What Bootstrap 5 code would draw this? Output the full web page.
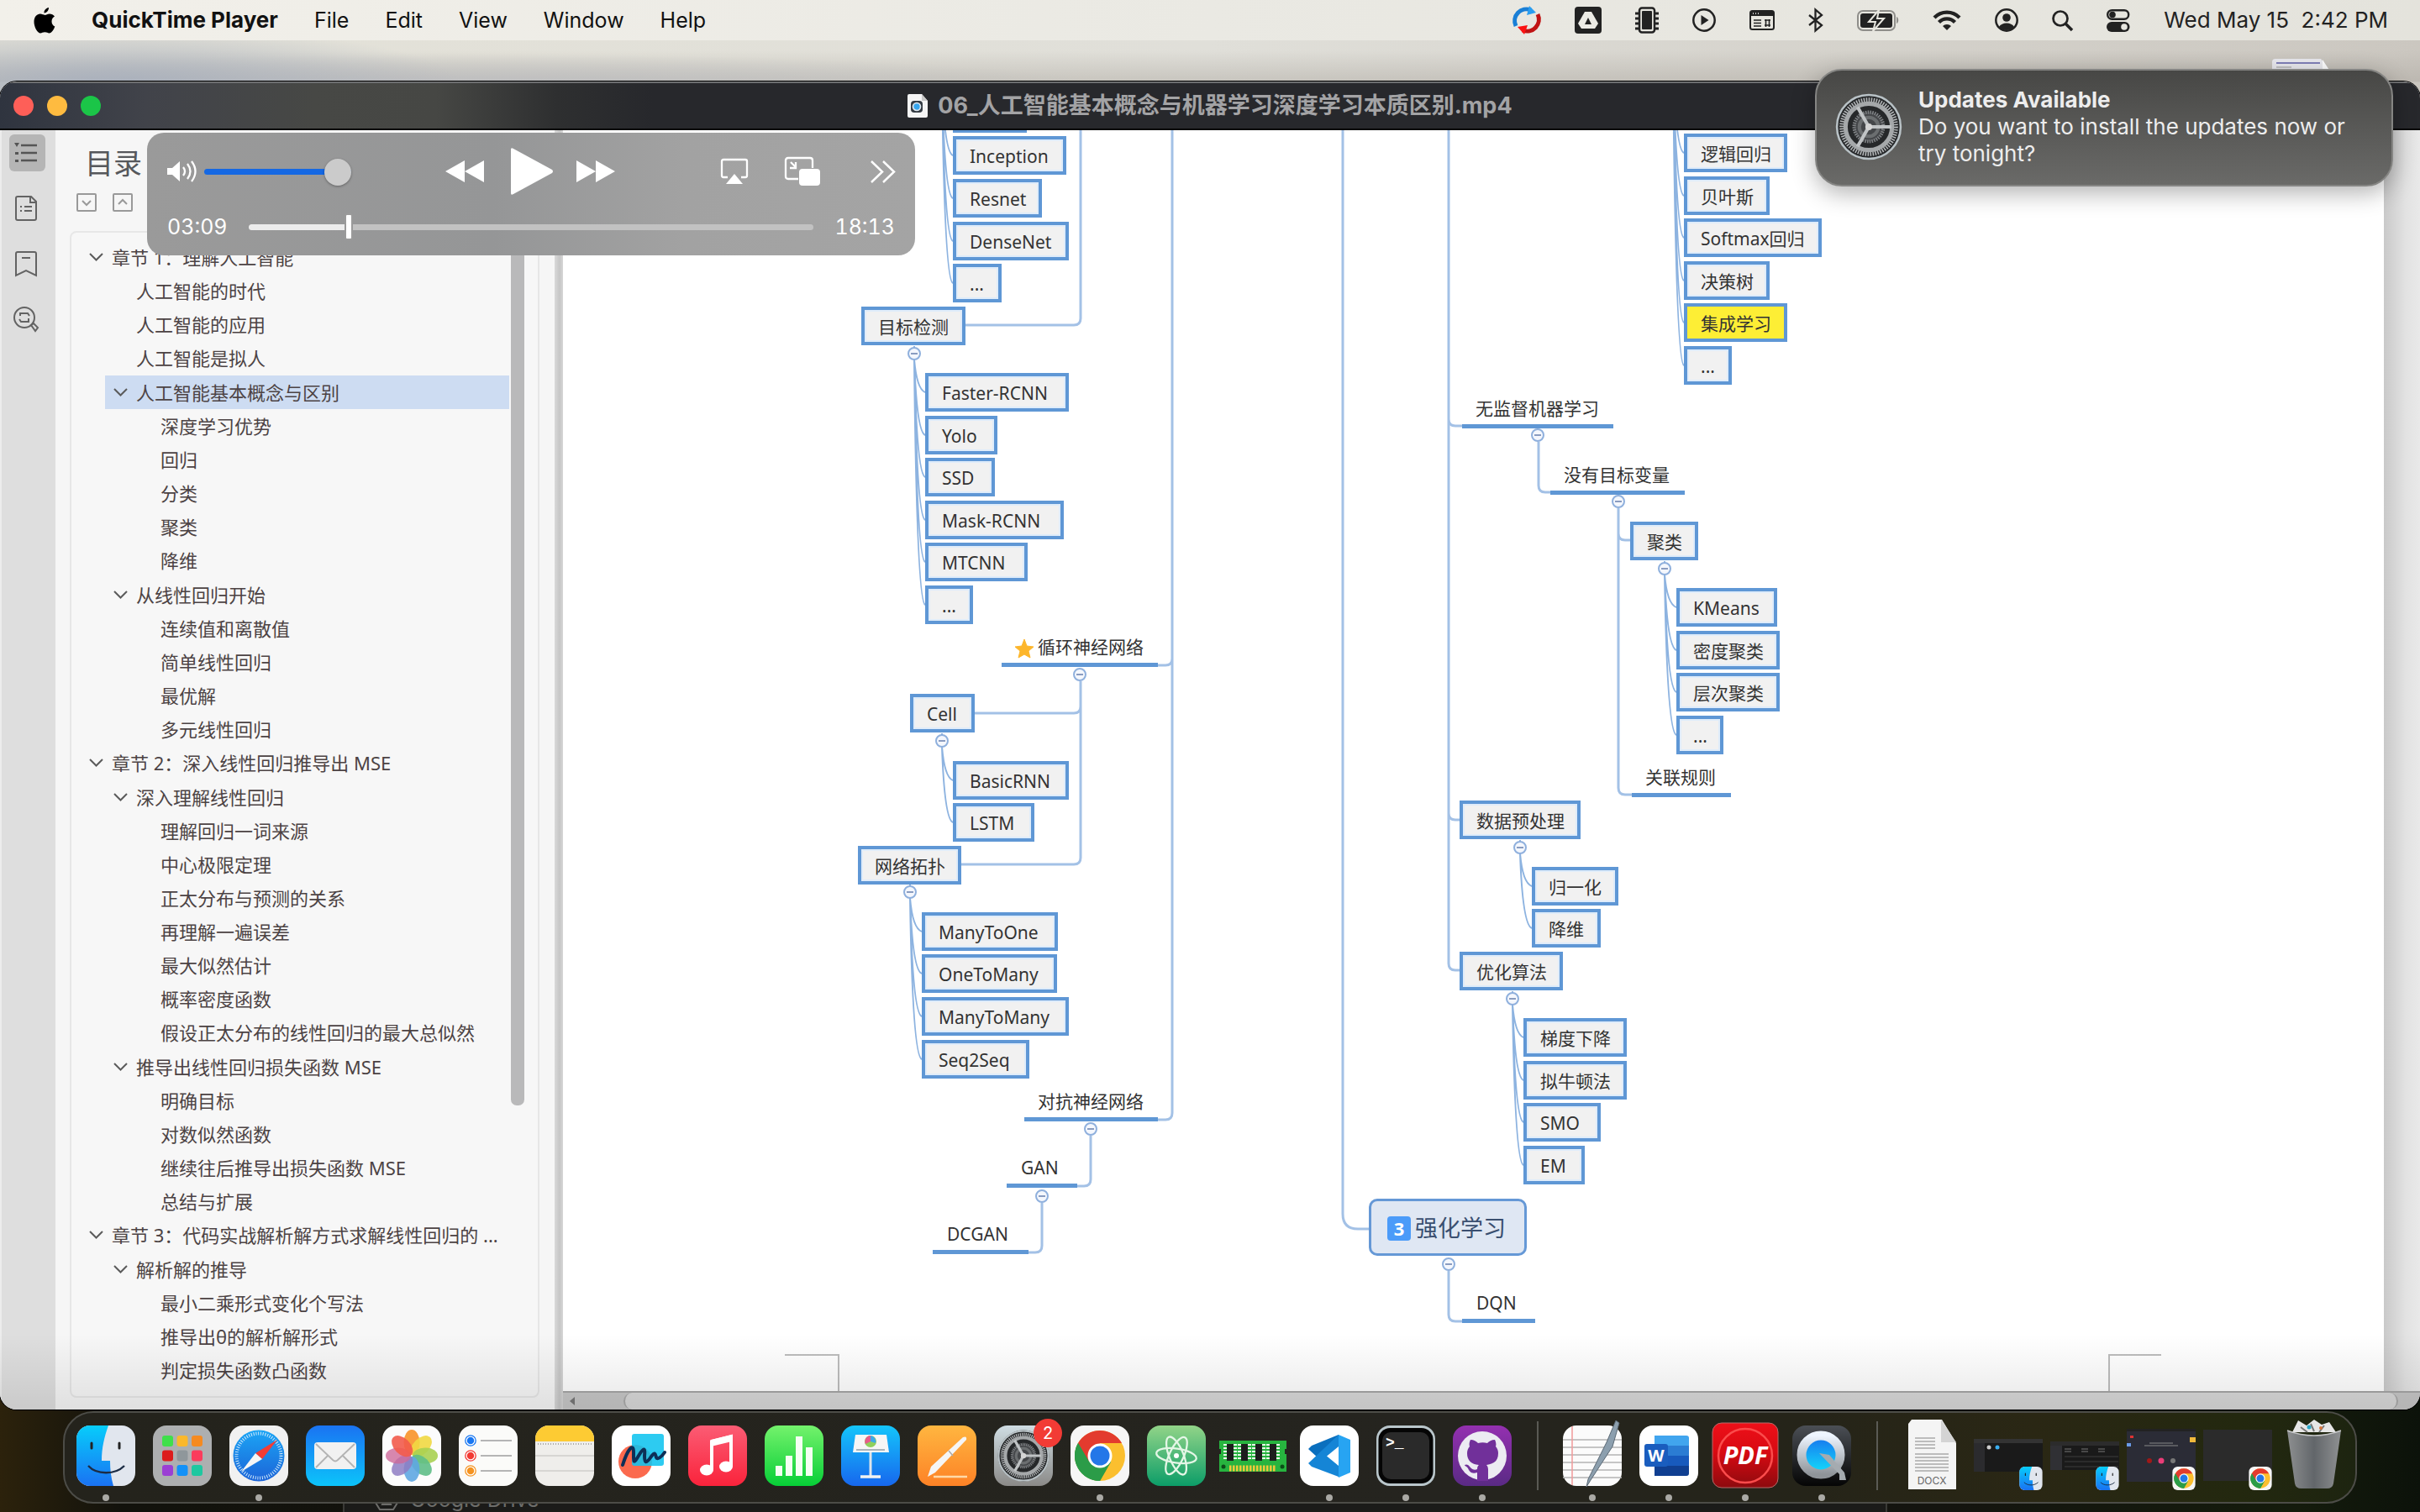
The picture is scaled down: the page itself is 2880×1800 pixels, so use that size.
<!DOCTYPE html>
<html lang="zh-CN">
<head>
<meta charset="utf-8">
<meta name="viewport" content="width=device-width, initial-scale=1">
<title>QuickTime Player</title>
<link href="https://cdn.jsdelivr.net/npm/bootstrap@5.3.0/dist/css/bootstrap.min.css" rel="stylesheet">
<style>
:root{--ui:Inter,"Noto Sans CJK SC",sans-serif;--doc:"Noto Sans","Noto Sans CJK SC",sans-serif;--line:#a3c1e6;--edge:#5f97d5}
body{height:100vh;overflow:hidden;font-family:var(--ui);font-size:26px;line-height:32px;color:#111;
 background:radial-gradient(ellipse 420px 70px at 130px 100px,#a9b0bc,transparent),radial-gradient(ellipse 760px 40px at 560px 104px,#bcbdc0,transparent),linear-gradient(180deg,transparent 60px,rgba(170,165,158,.45) 97px,transparent 98px),linear-gradient(90deg,#e4e2d8,#e0dfd9 50%,#cbc7c0) 0 0/100% 130px no-repeat,linear-gradient(90deg,#2c220c,#12120c 5%,#14140f 80%,#141b0c 95%,#0c120a)}
button,a.row-link{color:inherit;text-decoration:none}
.icon-btn{background:none;border:0;padding:0;display:flex;color:inherit}
svg{display:block;flex:none;overflow:visible}
.menubar{height:48px;background:linear-gradient(90deg,#f2f0ea,#eae9e3 50%,#e4e3dc);padding:0 38px 0 40px}
.menus{gap:43px;font-size:25px}
.app-name{font-size:26px;font-weight:700}
.status{color:#222;font-size:26px;gap:40px}
.clock{white-space:pre}
.player-window{margin-top:49px;border-radius:20px;overflow:hidden;min-height:0;background:#dedede;box-shadow:0 0 0 1px #000}
.titlebar{height:58px;background:linear-gradient(90deg,#2f343f,#41434a 6%,#474845 13%,#464744 18%,#2e2f30 23%,#27282c 27%);border-top:2px solid #6d6e70;border-bottom:2px solid #050505}
.lights{left:16px;top:0;bottom:0;gap:16px}
.light{width:24px;height:24px;border-radius:50%;border:0;padding:0}
.file-title{font-weight:700;font-size:27px;color:#a3a3a5;gap:12px;line-height:30px}
.video{min-height:0}
.rail{width:66px;background:#dedede;border-left:2px solid #ececec;padding:5px 0 0 9px;color:#636363}
.rail button{width:43px;height:44px;margin-bottom:22px;padding-right:4px;align-items:center;justify-content:center;border-radius:6px}
.rail .on{background:#b5b5b5}
.outline{width:594px;background:#f6f6f6;padding:20px 18px 14px 17px;font-family:var(--doc)}
.outline h2{font-size:34px;line-height:38px;font-weight:400;color:#56585c;margin:0 0 17px 18px}
.fold{gap:19px;margin:0 0 23px 8px;color:#9b9b9b}
.tree-box{border:2px solid #e7e7e7;border-radius:8px;min-height:0;padding:9px 16px 0 11px;background:#f7f7f7}
.tree,.tree ul{list-style:none;margin:0;padding:0;font-size:22px;color:#4c4344}
.tree ul{padding-left:29px}
.row-link{display:flex;align-items:center;gap:10px;height:40px;padding-left:10px;line-height:30px;white-space:nowrap}
.row-link.leaf{padding-left:37px}
.branch{margin-top:1px}
.chosen{background:#cddcf2}
.tree-thumb{width:16px;height:1030px;background:#b9b9ba;border-radius:0 0 7px 7px;margin-left:2px}
.divider{width:10px;background:linear-gradient(90deg,#d9d9d9,#c6c6c6 60%,#d6d6d6)}
.canvas{background:#fff;overflow:hidden;min-height:0}
.vbar{width:43px;background:linear-gradient(90deg,#c9c9c9,#e2e2e2 60%,#e9e9e9)}
.hbar{height:22px;background:#c6c6c6;border-top:2px solid #a5a5a5;padding:0 26px 0 8px;gap:58px;color:#777}
.hthumb{background:#d8d8d8;border:2px solid #a9a9a9;border-width:0 2px;border-radius:12px}
.shade{left:0;right:0;bottom:0;height:90px;background:linear-gradient(180deg,transparent,rgba(0,0,0,.09));pointer-events:none}
.node{position:absolute;font-family:var(--doc);font-size:21px;line-height:26px;color:#333;white-space:nowrap}
.boxed{height:46px;padding:7px 0 0 16px;border:4px solid var(--edge);background:#f1f1f1;box-shadow:inset 0 0 0 2px #dfecfa}
.yellow{background:#fdee35;box-shadow:none}
.lined{height:46px;border-bottom:5px solid var(--edge);padding-top:9px}
.topic{height:68px;border:3px solid #6598d6;border-radius:10px;background:#dfe7f3;font-size:27px;line-height:36px;color:#3a4f70;padding:14px 0 0 52px}
.num{left:19px;top:18px;width:28px;height:29px;border-radius:4px;background:#4b9bf9;color:#fff;font-size:22px;line-height:29px;font-weight:700}
.hud{left:175px;top:3px;width:914px;height:146px;border-radius:20px;background:linear-gradient(90deg,#9a9a9a,#959697 45%,#a2a2a2 70%,#a4a4a4);color:#fff;padding:16px 24px 0 24px}
.hud-top{height:60px}
.hud-time{font-size:25px;margin-top:20px;line-height:30px;font-variant-numeric:tabular-nums}
.transport{gap:30px;margin-left:112px}
.vol{width:175px;margin-left:8px}
.seek{width:672px}
input[type=range]{-webkit-appearance:none;appearance:none;height:32px;background:none}
input[type=range]::-webkit-slider-runnable-track{height:7px;border-radius:4px}
input[type=range]::-webkit-slider-thumb{-webkit-appearance:none}
.vol::-webkit-slider-runnable-track{background:#1568e3}
.vol::-webkit-slider-thumb{width:32px;height:32px;margin-top:-12px;border-radius:50%;background:#cbcbcb;box-shadow:0 1px 3px rgba(0,0,0,.35)}
.seek::-webkit-slider-runnable-track{background:linear-gradient(90deg,#ececec 17%,#c2c2c2 17%)}
.seek::-webkit-slider-thumb{width:10px;height:32px;margin-top:-13px;border-radius:3px;background:#fff;border:2px solid #9a9a9a}
.notice{top:82px;right:32px;width:688px;height:140px;border-radius:32px;background:linear-gradient(180deg,#474745,#6a6a68);border:2px solid #858583;box-shadow:0 8px 28px rgba(0,0,0,.3);color:#ededed;padding:0 30px 2px 21px;gap:18px;font-size:26px}
.deskfile{top:70px;right:106px}
.dock{margin-top:2px;height:110px;gap:19px;padding:0 13px 5px 13px;border:2px solid #4c4c47;border-radius:36px;background:linear-gradient(90deg,#24231c,#25241f 60%,#252419 76%,#2a2714 86%,#23280f 95%,#1d2410)}
.app{position:relative;width:72px;height:72px}
.app.run::after{content:"";position:absolute;left:32px;top:82px;width:8px;height:8px;border-radius:50%;background:#aaa9a5}
.app svg{width:72px;height:72px}
.sep{width:21px;height:82px;background:linear-gradient(#5a5a54,#5a5a54) center/2px 100% no-repeat}
.count{right:-10px;top:-8px;width:34px;height:34px;border-radius:50%;background:#f23b35;color:#fff;font-size:20px;line-height:34px}
.under{height:10px}
.drive-panel{left:408px;right:634px;bottom:0;height:30px;background:#1b1b19;color:#6d6d6a;padding:0 0 0 36px;gap:14px;font-size:25px;line-height:30px;border-left:2px solid #3a3a36;border-right:2px solid #3a3a36}
.dock,.notice{z-index:2}
</style>
<script src="https://cdn.jsdelivr.net/npm/bootstrap@5.3.0/dist/js/bootstrap.bundle.min.js"></script>
</head>
<body class="d-flex flex-column position-relative">
<svg width="0" height="0" class="position-absolute" aria-hidden="true"><defs>
<linearGradient id="gFind" x2="0" y2="1"><stop stop-color="#07cdfb"/><stop offset="1" stop-color="#1a72f3"/></linearGradient>
<linearGradient id="gBlue" x2="0" y2="1"><stop stop-color="#1a73f2"/><stop offset="1" stop-color="#0cc4fa"/></linearGradient>
<linearGradient id="gKey" x2="0" y2="1"><stop stop-color="#14c5fb"/><stop offset="1" stop-color="#1767ee"/></linearGradient>
<linearGradient id="gSaf" x2="0" y2="1"><stop stop-color="#1ba5f5"/><stop offset="1" stop-color="#1c64d8"/></linearGradient>
<linearGradient id="gRed" x2="0" y2="1"><stop stop-color="#fb5c74"/><stop offset="1" stop-color="#fa233b"/></linearGradient>
<linearGradient id="gGreen" x2="0" y2="1"><stop stop-color="#74f26c"/><stop offset="1" stop-color="#07cf37"/></linearGradient>
<linearGradient id="gOr" x2="0" y2="1"><stop stop-color="#ffb640"/><stop offset="1" stop-color="#fd8226"/></linearGradient>
<linearGradient id="gGrey" x2="0" y2="1"><stop stop-color="#cfdde3"/><stop offset="1" stop-color="#8b8a88"/></linearGradient>
<linearGradient id="gAtom" x2="0" y2="1"><stop stop-color="#92d488"/><stop offset="1" stop-color="#0c9d68"/></linearGradient>
<linearGradient id="gGit" x2="0" y2="1"><stop stop-color="#9430b0"/><stop offset="1" stop-color="#5a2a85"/></linearGradient>
<linearGradient id="gPdf" x2="0" y2="1"><stop stop-color="#ee1019"/><stop offset=".45" stop-color="#d80a12"/><stop offset="1" stop-color="#8d0a0e"/></linearGradient>
<linearGradient id="gQt" x2="0" y2="1"><stop stop-color="#4b4f55"/><stop offset="1" stop-color="#050505"/></linearGradient>
<linearGradient id="gSil" x2="0" y2="1"><stop stop-color="#eef5ff"/><stop offset="1" stop-color="#8f9499"/></linearGradient>
<linearGradient id="gCy" x2="0" y2="1"><stop stop-color="#1872ee"/><stop offset="1" stop-color="#12e0fb"/></linearGradient>
<linearGradient id="gBin" x2="1" y2="0"><stop stop-color="#8d8f90"/><stop offset=".5" stop-color="#62666a"/><stop offset="1" stop-color="#8f9192"/></linearGradient>
<symbol id="finder" viewBox="0 0 72 72"><rect x="1" width="70" height="72" rx="16" fill="#e1e6ee"/><path d="M17 0h22c-5 14-8 27-8 42h10c0 10 1 20 4 30H17A16 16 0 0 1 1 56V16A16 16 0 0 1 17 0z" fill="url(#gFind)"/><path d="M19 21v6M52 21v6" stroke="#222" stroke-width="3" stroke-linecap="round"/><path d="M15 48c10 11 32 11 43 0" fill="none" stroke="#1c2c44" stroke-width="2.400"/></symbol>
<symbol id="chrome" viewBox="0 0 72 72"><rect x="1" width="70" height="72" rx="16" fill="#f6f6f6"/><circle cx="36" cy="36" r="30" fill="#fbbf2f"/><path d="M36 36 10 21A30 30 0 0 0 36 66L49 43.500z" fill="#2b9c48"/><path d="M36 21h26L49 43z" fill="#fbbf2f"/><path d="M10 21A30 30 0 0 1 62 21H36L23 43z" fill="#e33b2e"/><path d="M10 21A30 30 0 0 0 36 66L49 43 36 50 23 43z" fill="#2b9c48"/><circle cx="36" cy="36" r="14.500" fill="#fff"/><circle cx="36" cy="36" r="11.500" fill="#2477e8"/></symbol>
<symbol id="gear" viewBox="0 0 80 80"><circle cx="40" cy="40" r="38" fill="#26282a"/><circle cx="40" cy="40" r="37" fill="none" stroke="#b9c2c6" stroke-width="2.500"/><circle cx="40" cy="40" r="31.500" fill="none" stroke="#b4b7b9" stroke-width="5" stroke-dasharray="1.500 1.400"/><circle cx="40" cy="40" r="27" fill="none" stroke="#a5a8aa" stroke-width="5"/><circle cx="40" cy="40" r="17" fill="#45474a" stroke="#808386" stroke-width="4" stroke-dasharray="1.500 1.200"/><circle cx="40" cy="40" r="11" fill="none" stroke="#6b6e70" stroke-width="4"/><path d="M40 40h26M40 40 27 17M40 40 27 63" stroke="#c0c3c5" stroke-width="4"/><circle cx="40" cy="40" r="4" fill="#d5d5d5"/></symbol>
<symbol id="chev" viewBox="0 0 17 10"><path d="M1 1l7.500 7.500L16 1" fill="none" stroke="#5b5b5b" stroke-width="2"/></symbol>
</defs></svg>

<header class="menubar d-flex align-items-center justify-content-between">
 <nav class="d-flex align-items-center menus">
  <button class="icon-btn" aria-label="Apple"><svg width="26" height="31" viewBox="0 0 26 31"><path d="M18 0c.2 3-2.500 6.500-5.500 6.500C12 3.500 15 .5 18 0zM21.500 16.500c0-3 1.600-4.800 3.500-6-1.500-2-3.600-3-6-3-2.500 0-4 1.400-5.500 1.400S10 7.600 7.800 7.600C4 7.600.5 11 .5 17c0 6.500 4.300 13.500 7.600 13.500 1.800 0 2.800-1.200 5.300-1.200s3.300 1.200 5.200 1.200c2.900 0 5.600-4.600 6.700-7.900-2-.9-3.800-3-3.800-6.100z"/></svg></button>
  <button class="icon-btn app-name">QuickTime Player</button>
  <button class="icon-btn">File</button><button class="icon-btn">Edit</button><button class="icon-btn">View</button><button class="icon-btn">Window</button><button class="icon-btn">Help</button>
 </nav>
 <div class="d-flex align-items-center status">
  <button class="icon-btn" aria-label="Sync"><svg width="34" height="34" viewBox="0 0 34 34" fill="none" stroke-width="5"><path d="M4 24A14 14 0 0 1 22 5" stroke="#1a7fd6"/><path d="M20 0l8 8-11 3z" fill="#2a9df0"/><path d="M30 10A14 14 0 0 1 12 29" stroke="#c01414"/><path d="M14 34l-8-9 12-2z" fill="#fb1212"/></svg></button>
  <button class="icon-btn" aria-label="Drive"><svg width="32" height="32" viewBox="0 0 32 32"><rect width="32" height="32" rx="4" fill="#222"/><path d="M12 6h8l8 14-4 6H8l-4-6z" fill="#ecebe5"/><path d="M16 13l4 8h-8z" fill="#222"/></svg></button>
  <button class="icon-btn" aria-label="Memory"><svg width="28" height="32" viewBox="0 0 28 32"><rect x="5" y="1.500" width="18" height="29" rx="3" fill="none" stroke="#222" stroke-width="2.500"/><rect x="8" y="5" width="12" height="22" rx="1" fill="#222"/><path d="M0 8h5M0 14h5M0 20h5M0 26h5M23 8h5M23 14h5M23 20h5M23 26h5" stroke="#222" stroke-width="3"/></svg></button>
  <button class="icon-btn" aria-label="Now playing"><svg width="28" height="28" viewBox="0 0 28 28"><circle cx="14" cy="14" r="12.700" fill="none" stroke="#222" stroke-width="2.500"/><path d="M10.500 8v12l9-6z" fill="#222"/></svg></button>
  <button class="icon-btn" aria-label="Shortcuts"><svg width="30" height="24" viewBox="0 0 30 24"><rect x="1" y="1" width="28" height="22" rx="2.500" fill="none" stroke="#222" stroke-width="2"/><path d="M1 1h28v6H1z" fill="#222"/><path d="M4 4h1M7 4h1M10 4h1" stroke="#fff" stroke-width="1.500"/><path d="M5 12h9M5 15.500h9M5 19h9M18 12h7M18 18h7M19.500 11v9M23.500 11v9" stroke="#222" stroke-width="1.600"/></svg></button>
  <button class="icon-btn" aria-label="Bluetooth"><svg width="18" height="28" viewBox="0 0 18 28"><path d="M1 8l15 12-7.500 6.500v-25L16 8 1 20" fill="none" stroke="#222" stroke-width="2.300"/></svg></button>
  <button class="icon-btn" aria-label="Battery"><svg width="50" height="25" viewBox="0 0 50 25"><rect x="1" y="1" width="44" height="23" rx="6" fill="none" stroke="#8f8e8a" stroke-width="2"/><rect x="4" y="4" width="38" height="17" rx="3" fill="#222"/><path d="M47 8c3 1 3 7 0 8z" fill="#8f8e8a"/><path d="M26 0 14 14h8l-3 11 13-15h-8z" fill="#222" stroke="#e7e6df" stroke-width="2"/></svg></button>
  <button class="icon-btn" aria-label="Wi-Fi"><svg width="34" height="24" viewBox="0 0 34 24" fill="none" stroke="#222" stroke-width="4.300"><path d="M2 9a21 21 0 0 1 30 0M7.500 14.500a13 13 0 0 1 19 0"/><path d="M17 24l-5-5a7 7 0 0 1 10 0z" fill="#222" stroke="none"/></svg></button>
  <button class="icon-btn" aria-label="User"><svg width="28" height="28" viewBox="0 0 28 28"><circle cx="14" cy="14" r="12.700" fill="none" stroke="#222" stroke-width="2.500"/><circle cx="14" cy="11" r="4.800" fill="#222"/><path d="M5 22c3-6 15-6 18 0a12 12 0 0 1-18 0z" fill="#222"/></svg></button>
  <button class="icon-btn" aria-label="Search"><svg width="25" height="25" viewBox="0 0 25 25" fill="none" stroke="#222" stroke-width="2.700"><circle cx="10" cy="10" r="8.500"/><path d="M16 16l8 8" stroke-width="3.500"/></svg></button>
  <button class="icon-btn" aria-label="Control Centre"><svg width="28" height="27" viewBox="0 0 28 27"><rect x="1.200" y="1.200" width="25" height="10.500" rx="5.200" fill="none" stroke="#222" stroke-width="2.400"/><circle cx="7" cy="6.500" r="3.800" fill="#222"/><rect y="15" width="27.500" height="12" rx="6" fill="#222"/><circle cx="21" cy="21" r="3.800" fill="#e7e6df"/></svg></button>
  <span class="clock">Wed May 15  2:42 PM</span>
 </div>
</header>

<svg class="deskfile position-absolute" width="70" height="28" viewBox="0 0 70 28"><path d="M0 4q0-4 4-4h54l12 16v12H0z" fill="#e9e9ee"/><path d="M5 5h52" stroke="#8080b8" stroke-width="2"/><path d="M5 10h18M5 13h30" stroke="#999" stroke-width="1"/><path d="M60 1v14h9z" fill="#fff"/></svg>

<main class="player-window flex-fill d-flex flex-column position-relative">
 <div class="titlebar position-relative d-flex align-items-center justify-content-center">
  <div class="lights position-absolute d-flex align-items-center"><button class="light" style="background:#fe5f58" aria-label="Close"></button><button class="light" style="background:#febb40" aria-label="Minimise"></button><button class="light" style="background:#1bc548" aria-label="Zoom"></button></div>
  <div class="file-title d-flex align-items-center"><svg width="24" height="28" viewBox="0 0 24 28"><path d="M2 0h15l7 8v18q0 2-2 2H2q-2 0-2-2V2q0-2 2-2z" fill="#f5f5f5"/><path d="M17 0v8h7z" fill="#c8c8c8"/><rect x="4" y="8" width="14" height="14" rx="4" fill="#333a42"/><circle cx="11" cy="15" r="4.500" fill="#35a5ee" stroke="#dde6ee" stroke-width="1.700"/></svg><span>06_人工智能基本概念与机器学习深度学习本质区别.mp4</span></div>
 </div>
 <div class="video d-flex flex-fill position-relative">
  <nav class="rail">
   <button class="icon-btn on" aria-label="Outline"><svg width="28" height="24" viewBox="0 0 28 24"><path d="M8 3h19M8 12h19M8 21h19" stroke="#555" stroke-width="2.400"/><path d="M0 0h6L3 5zM1 11h4v3H1zM1 20h4v3H1z" fill="#555"/></svg></button>
   <button class="icon-btn" aria-label="Pages"><svg width="26" height="30" viewBox="0 0 26 30" fill="none" stroke="#636363" stroke-width="2"><path d="M3 1h16l6 6v20q0 2-2 2H3q-2 0-2-2V3q0-2 2-2z"/><path d="M18 1v7h7M6 13h2M11 13h9M6 18h2M11 18h9"/></svg></button>
   <button class="icon-btn" aria-label="Bookmarks"><svg width="26" height="30" viewBox="0 0 26 30" fill="none" stroke="#636363" stroke-width="2"><path d="M3 1h20q2 0 2 2v26l-12-6-12 6V3q0-2 2-2zM8 8h10"/></svg></button>
   <button class="icon-btn" aria-label="Search"><svg width="30" height="30" viewBox="0 0 30 30" fill="none" stroke="#636363" stroke-width="2"><circle cx="13" cy="13" r="12"/><path d="M8 11V8h9l2 3M18 14v4H9l-2-3M21 22l3-2 5 5-3 4z"/></svg></button>
  </nav>
  <aside class="outline d-flex flex-column">
   <h2>目录</h2>
   <div class="d-flex fold">
    <button class="icon-btn" aria-label="Expand all"><svg width="24" height="22" viewBox="0 0 24 22" fill="none" stroke="#999" stroke-width="2"><rect x="1" y="1" width="22" height="20" rx="1"/><path d="M7 9l5 5 5-5"/></svg></button>
    <button class="icon-btn" aria-label="Collapse all"><svg width="24" height="22" viewBox="0 0 24 22" fill="none" stroke="#999" stroke-width="2"><rect x="1" y="1" width="22" height="20" rx="1"/><path d="M7 13l5-5 5 5"/></svg></button>
   </div>
   <div class="tree-box flex-fill d-flex">
    <ul class="tree flex-fill" id="tree"></ul>
    <div class="tree-thumb"></div>
   </div>
  </aside>
  <div class="divider"></div>
  <div class="flex-fill d-flex flex-column" style="min-width:0">
   <div class="d-flex flex-fill" style="min-height:0">
    <section class="canvas flex-fill position-relative" id="canvas">
     <svg width="2167" height="1501" viewBox="670 155 2167 1501" fill="none" stroke="#a3c1e6" stroke-width="3" id="links">
      <path d="M1286 155v224q0 8-8 8H1149M1395 155v629q0 8-8 8h-9M1395 780v545q0 8-8 8h-9M1286 811v30q0 8-8 8H1160M1286 840v181q0 8-8 8H1144M1298 1352v52q0 8-8 8h-8M1240 1432v51q0 8-8 8h-8"/>
      <path d="M1598 155v1290q0 18 18 18h13M1724 155v344q0 8 8 8h8M1724 490v478q0 8 8 8h5M1724 960v187q0 8 8 8h5M1831 526v52q0 8 8 8h6M1926 605v30q0 8 8 8h6M1926 630v308q0 8 8 8h8M1724 1513v52q0 8 8 8h8"/>
      <path d="M934 1613h64v43M2572 1613h-62v43" stroke="#bdbdbd" stroke-width="2"/>
      <path d="M1219 761l3 8 8 1-6 5 2 8-7-4-7 4 2-8-6-5 8-1z" fill="#fdb62b" stroke="#fdb62b" stroke-width="1"/>
     </svg>
    </section>
    <div class="vbar"></div>
   </div>
   <div class="hbar d-flex"><svg width="6" height="20" viewBox="0 0 6 20"><path d="M6 5v10L0 10z" fill="#777"/></svg><div class="hthumb flex-fill"></div></div>
  </div>
  <div class="shade position-absolute"></div>
  <div class="hud position-absolute">
   <div class="hud-top d-flex align-items-center">
    <svg width="36" height="26" viewBox="0 0 36 26"><path d="M0 9h6l9-8v24l-9-8H0z" fill="#fff"/><path d="M19 8q4 5 0 10M24 4q7 9 0 18M29 1q9 12 0 24" fill="none" stroke="#fff" stroke-width="2.300"/></svg>
    <input class="vol" type="range" value="100" aria-label="Volume">
    <div class="d-flex align-items-center transport">
     <button class="icon-btn" aria-label="Rewind"><svg width="46" height="26" viewBox="0 0 46 26"><path d="M23 0v26L0 13zM46 0v26L23 13z" fill="#fff"/></svg></button>
     <button class="icon-btn" aria-label="Play"><svg width="50" height="56" viewBox="-2 0 50 56"><path d="M0 2q0-3 3-1l46 25q2 2 0 4L3 55q-3 2-3-1z" fill="#fff"/></svg></button>
     <button class="icon-btn" aria-label="Forward"><svg width="46" height="26" viewBox="0 0 46 26"><path d="M0 0v26l23-13zM23 0v26l23-13z" fill="#fff"/></svg></button>
    </div>
    <div class="d-flex align-items-center ms-auto" style="gap:44px">
     <button class="icon-btn" aria-label="AirPlay"><svg width="32" height="30" viewBox="0 0 32 30"><path d="M8 22H3q-2 0-2-2V3q0-2 2-2h26q2 0 2 2v17q0 2-2 2h-5" fill="none" stroke="#fff" stroke-width="2.300"/><path d="M16 18l10 12H6z" fill="#fff"/></svg></button>
     <button class="icon-btn" aria-label="Picture in picture"><svg width="42" height="34" viewBox="0 0 42 34"><path d="M16 26H4q-3 0-3-3V4q0-3 3-3h26q3 0 3 3v9M7 6l6 6M13 6v7H6" fill="none" stroke="#fff" stroke-width="2.300"/><rect x="17" y="14" width="25" height="20" rx="4" fill="#fff"/></svg></button>
     <button class="icon-btn ms-3" aria-label="More"><svg width="29" height="27" viewBox="0 0 29 27"><path d="M1 1l13 12.500L1 26M15 1l13 12.500L15 26" fill="none" stroke="#fff" stroke-width="2.500"/></svg></button>
    </div>
   </div>
   <div class="hud-time d-flex align-items-center justify-content-between"><span>03:09</span><input class="seek" type="range" max="1093" value="189" aria-label="Position"><span>18:13</span></div>
  </div>
 </div>
</main>

<div class="drive-panel position-absolute d-flex align-items-center"><svg width="28" height="25" viewBox="0 0 28 25"><path d="M9 1h10l8 15-5 8H6l-5-8zM14 9l5 9H9z" fill="none" stroke="#6d6d6a" stroke-width="2"/></svg><span>Google Drive</span></div>
<aside class="notice position-absolute d-flex align-items-center" role="alert">
 <svg width="82" height="82"><use href="#gear"/></svg>
 <div><div class="fw-bold">Updates Available</div><div>Do you want to install the updates now or try tonight?</div></div>
</aside>

<footer class="dock d-flex align-items-center align-self-center">
 <div class="app run"><svg><use href="#finder"/></svg></div>
 <div class="app"><svg viewBox="0 0 72 72"><rect x="1" width="70" height="72" rx="16" fill="#adafb0"/><g><rect x="12" y="12" width="13" height="13" rx="3" fill="#3fe04a"/><rect x="29.500" y="12" width="13" height="13" rx="3" fill="#fbb82c"/><rect x="47" y="12" width="13" height="13" rx="3" fill="#f58a20"/><rect x="12" y="29.500" width="13" height="13" rx="3" fill="#dd1c1c"/><rect x="29.500" y="29.500" width="13" height="13" rx="3" fill="#8f979b"/><rect x="47" y="29.500" width="13" height="13" rx="3" fill="#fb3c5c"/><rect x="12" y="47" width="13" height="13" rx="3" fill="#9b3fd4"/><rect x="29.500" y="47" width="13" height="13" rx="3" fill="#1391f7"/><rect x="47" y="47" width="13" height="13" rx="3" fill="#1ec8a0"/></g></svg></div>
 <div class="app run"><svg viewBox="0 0 72 72"><rect x="1" width="70" height="72" rx="16" fill="#f1f1f1"/><circle cx="36" cy="36" r="30.500" fill="url(#gSaf)"/><circle cx="36" cy="36" r="26.500" fill="none" stroke="#cfe9fb" stroke-width="4" stroke-dasharray="1 1.800"/><path d="M58 17 40 40l-8-7z" fill="#f33c35"/><path d="M15 55 32 33l8 7z" fill="#f6f6f6"/></svg></div>
 <div class="app"><svg viewBox="0 0 72 72"><rect x="1" width="70" height="72" rx="16" fill="url(#gBlue)"/><rect x="11" y="20" width="50" height="32" rx="4" fill="#f1f1f1"/><path d="M13 22l20 19q3 3 6 0l20-19M13 50l15-15M59 50 44 35" fill="none" stroke="#b3b3b3" stroke-width="1.800"/></svg></div>
 <div class="app"><svg viewBox="0 0 72 72"><rect x="1" width="70" height="72" rx="16" fill="#fcfcfc"/><g opacity=".9"><ellipse cx="36" cy="20" rx="9.500" ry="15" fill="#f9942a"/><ellipse cx="36" cy="20" rx="9.500" ry="15" fill="#f0d52f" transform="rotate(45 36 36)" opacity=".9"/><ellipse cx="36" cy="20" rx="9.500" ry="15" fill="#a0cc3f" transform="rotate(90 36 36)" opacity=".9"/><ellipse cx="36" cy="20" rx="9.500" ry="15" fill="#4fb87b" transform="rotate(135 36 36)" opacity=".9"/><ellipse cx="36" cy="20" rx="9.500" ry="15" fill="#4f9fe0" transform="rotate(180 36 36)" opacity=".9"/><ellipse cx="36" cy="20" rx="9.500" ry="15" fill="#8370bd" transform="rotate(225 36 36)" opacity=".85"/><ellipse cx="36" cy="20" rx="9.500" ry="15" fill="#c95a90" transform="rotate(270 36 36)" opacity=".8"/><ellipse cx="36" cy="20" rx="9.500" ry="15" fill="#f24a38" transform="rotate(315 36 36)" opacity=".9"/></g></svg></div>
 <div class="app"><svg viewBox="0 0 72 72"><rect x="1" width="70" height="72" rx="16" fill="#fbfbf9"/><path d="M27 18h37M27 36h37M27 54h37" stroke="#b5b5b5" stroke-width="1.800"/><g stroke="#fff" stroke-width="1.500"><circle cx="15" cy="18" r="5" fill="#1877f2"/><circle cx="15" cy="36" r="5" fill="#f33a33"/><circle cx="15" cy="54" r="5" fill="#f59320"/></g><g fill="none" stroke-width="1.300"><circle cx="15" cy="18" r="6.200" stroke="#1877f2"/><circle cx="15" cy="36" r="6.200" stroke="#f33a33"/><circle cx="15" cy="54" r="6.200" stroke="#f59320"/></g></svg></div>
 <div class="app"><svg viewBox="0 0 72 72"><rect x="1" width="70" height="72" rx="16" fill="#efeeeb"/><path d="M1 19v-3A16 16 0 0 1 17 0h38a16 16 0 0 1 16 16v3z" fill="#fdcb33"/><path d="M1 36h70M1 54h70" stroke="#cfcecb" stroke-width="1.500"/><path d="M4 22h66" stroke="#aaa" stroke-width="2" stroke-dasharray="1 2"/></svg></div>
 <div class="app"><svg viewBox="0 0 72 72"><rect x="1" width="70" height="72" rx="16" fill="#fff"/><circle cx="29" cy="43" r="20" fill="#fb6a4e"/><rect x="25" y="10" width="38" height="38" rx="3" fill="#10c4ef" opacity=".88"/><path d="M14 47C20 28 27 20 27 32c0 10-1 16 6 4 6-10 8-10 7 0 0 9 2 10 8 1 5-7 5-2 6 1s6 0 10-6" fill="none" stroke="#0d2f57" stroke-width="4" stroke-linecap="round"/></svg></div>
 <div class="app"><svg viewBox="0 0 72 72"><rect x="1" width="70" height="72" rx="16" fill="url(#gRed)"/><path d="M29 52V19l23-6v36" fill="none" stroke="#fff" stroke-width="4"/><path d="M28 17l25-6v8l-25 6z" fill="#fff"/><ellipse cx="23" cy="53" rx="8" ry="6.500" fill="#fff"/><ellipse cx="46" cy="49" rx="8" ry="6.500" fill="#fff"/></svg></div>
 <div class="app"><svg viewBox="0 0 72 72"><rect x="1" width="70" height="72" rx="16" fill="url(#gGreen)"/><path d="M18 48v12M30 36v24M42 13v47M54 26v34" stroke="#f5fff3" stroke-width="8"/></svg></div>
 <div class="app"><svg viewBox="0 0 72 72"><rect x="1" width="70" height="72" rx="16" fill="url(#gKey)"/><path d="M18 11h37l3 21H15z" fill="#f6f6f6"/><path d="M19 29h34" stroke="#a9b4bb" stroke-width="2"/><circle cx="36" cy="19" r="7" fill="#8fd05c"/><path d="M36 19v-7a7 7 0 0 0-6 10z" fill="#e85a8a"/><path d="M36 19v-7a7 7 0 0 1 6 9z" fill="#3da9e8"/><path d="M36 32v28" stroke="#dfe5ea" stroke-width="3"/><path d="M24 61h24" stroke="#f2f2f2" stroke-width="3.500"/></svg></div>
 <div class="app"><svg viewBox="0 0 72 72"><rect x="1" width="70" height="72" rx="16" fill="url(#gOr)"/><path d="M13 61l4-12L55 14q5-2 4 3L22 56z" fill="#f5f5f5"/><path d="M38 30l5 6" stroke="#aaa" stroke-width="1.500"/><path d="M20 61h40" stroke="#ffd9a8" stroke-width="2.500"/></svg></div>
 <div class="app"><svg viewBox="0 0 72 72"><rect x="1" width="70" height="72" rx="16" fill="url(#gGrey)"/><use href="#gear" x="4" y="4" width="64" height="64"/></svg><span class="count position-absolute text-center">2</span></div>
 <div class="app run"><svg><use href="#chrome"/></svg></div>
 <div class="app"><svg viewBox="0 0 72 72"><rect x="1" width="70" height="72" rx="16" fill="url(#gAtom)"/><g fill="none" stroke="#e4f6e6" stroke-width="2.300"><ellipse cx="36" cy="36" rx="24" ry="8.500" transform="rotate(8 36 36)"/><ellipse cx="36" cy="36" rx="24" ry="8.500" transform="rotate(68 36 36)"/><ellipse cx="36" cy="36" rx="24" ry="8.500" transform="rotate(115 36 36)"/></g><circle cx="36" cy="36" r="3" fill="#fff"/></svg></div>
 <div class="app"><svg viewBox="0 0 72 72"><path d="M-4 18h80v10h-2v6h2v21H-4V34h2v-6h-2z" fill="#27b43f"/><path d="M8 48h56" stroke="#f2c83a" stroke-width="7" stroke-dasharray="2.500 1.500" transform="translate(0 3)"/><g stroke="#e9f5e9" stroke-width="16" stroke-dasharray="2 2"><path d="M9 22v20M26 22v20M43 22v20M60 22v20"/></g><path d="M5 22h8v20H5zM22 22h8v20h-8zM39 22h8v20h-8zM56 22h8v20h-8z" fill="#1d1d1d"/><circle cx="1" cy="49" r="2.500" fill="#0c4d18"/><circle cx="71" cy="49" r="2.500" fill="#0c4d18"/></svg></div>
 <div class="app run"><svg viewBox="0 0 72 72"><rect x="1" width="70" height="72" rx="16" fill="#fff"/><path d="M47 11v50L11 28l4-4z" fill="#0a6fbe"/><path d="M47 61V11L11 45l4 4z" fill="#1585d6"/><path d="M47 11l14 6v39l-14 6z" fill="#27a4f2"/><path d="M47 25v23L33 36.500z" fill="#fff"/></svg></div>
 <div class="app run"><svg viewBox="0 0 72 72"><rect x="1" width="70" height="72" rx="16" fill="#b9c6cb"/><rect x="3.500" y="3" width="65" height="66" rx="14" fill="#050505"/><rect x="8" y="8" width="56" height="56" rx="10" fill="#2a2a2a"/><text x="12" y="26" font-family="Liberation Mono" font-size="18" font-weight="700" fill="#fff">&gt;_</text></svg></div>
 <div class="app run"><svg viewBox="0 0 72 72"><rect x="1" width="70" height="72" rx="16" fill="url(#gGit)"/><circle cx="36" cy="36" r="29" fill="#ecebf2"/><path d="M30 66V56c-7 2-9-1-11-5-1-2-4-3-4-4 4-2 6 2 8 4 2 2 5 2 7 1 0-3 1-4 2-5-9-1-14-5-14-14 0-3 1-6 3-8-1-3 0-6 1-8 4 0 7 2 9 4 4-1 7-1 11 0 2-2 5-4 9-4 1 2 2 5 1 8 2 2 3 5 3 8 0 9-5 13-14 14 2 2 2 4 2 7v12z" fill="#71309a"/></svg></div>
 <div class="sep"></div>
 <div class="app run"><svg viewBox="0 0 72 72"><rect x="1" width="70" height="72" rx="16" fill="#fbfbfb"/><path d="M1 17h70M1 26h70M1 35h70M1 44h70M1 53h70M1 62h70" stroke="#b4b4b4" stroke-width="1.500"/><path d="M12 1v70" stroke="#f09a9a" stroke-width="1.500"/><path d="M64-6l4 3-8 28-26 40-5 8 2-9 22-44z" fill="#8c9fae" stroke="#5b6975" stroke-width="1"/></svg></div>
 <div class="app run"><svg viewBox="0 0 72 72"><rect x="1" width="70" height="72" rx="16" fill="#fff"/><path d="M19 12h38q3 0 3 3v9H19z" fill="#41a5ee"/><path d="M19 24h41v12H19z" fill="#2b7cd3"/><path d="M19 36h41v12H19z" fill="#185abd"/><path d="M19 48h41v9q0 3-3 3H19z" fill="#103f91"/><rect x="7" y="22" width="28" height="27" rx="3" fill="#1a5dbe"/><text x="21" y="43" text-anchor="middle" font-family="Open Sans" font-weight="700" font-size="20" fill="#fff">W</text></svg></div>
 <div class="app run"><svg viewBox="0 0 72 72"><rect x="-3" y="-3" width="78" height="77" rx="11" fill="url(#gPdf)" stroke="#b86a6a" stroke-width="1"/><circle cx="36" cy="36" r="32" fill="none" stroke="#fb4c4c" stroke-width="2.500"/><text x="36" y="46" text-anchor="middle" font-family="Open Sans" font-style="italic" font-weight="700" font-size="29" fill="#fff">PDF</text></svg></div>
 <div class="app run"><svg viewBox="0 0 72 72"><rect x="1" width="70" height="72" rx="16" fill="url(#gQt)"/><circle cx="35" cy="35" r="23" fill="url(#gCy)" stroke="url(#gSil)" stroke-width="11"/><path d="M33 33l24 25v7h8l-2-9-18-21z" fill="#a5abb0"/></svg></div>
 <div class="sep"></div>
 <div class="app"><svg viewBox="0 0 72 72"><path d="M12-7h36l17 28v55H8V-2z" fill="#f4f4f4"/><path d="M47-7v27h18z" fill="#d4d4d4"/><path d="M16 15h24M16 19h24M16 23h24M16 27h24M16 34h40M16 38h40M16 42h40M16 46h40M16 50h40M16 54h40" stroke="#bcbcbc" stroke-width="2"/><text x="36" y="70" text-anchor="middle" font-family="Inter" font-size="12" fill="#666">DOCX</text></svg></div>
 <div class="app"><svg viewBox="0 0 72 72"><rect x="-5" y="16" width="82" height="39" fill="#1a1a1a"/><path d="M-5 16H8v39H-5z" fill="#2b2b2e"/><path d="M-5 16h82v5H-5z" fill="#333"/><circle cx="13" cy="26" r="2.500" fill="#ccc"/><circle cx="23" cy="26" r="2.500" fill="#3aaef0"/><use href="#finder" x="49" y="49" width="28" height="28"/></svg></div>
 <div class="app"><svg viewBox="0 0 72 72"><rect x="-5" y="19" width="82" height="34" fill="#1a1a1a"/><path d="M-5 19H9v34H-5z" fill="#303034"/><path d="M-5 19h82v5H-5z" fill="#2c2c2c"/><path d="M12 28h60M12 31h60" stroke="#777" stroke-dasharray="8 12"/><path d="M12 37h64M12 43h64M12 49h64" stroke="#2b2b2b" stroke-width="2"/><use href="#finder" x="49" y="49" width="28" height="28"/></svg></div>
 <div class="app"><svg viewBox="0 0 72 72"><rect x="-5" y="4" width="82" height="63" fill="#2b2c36"/><path d="M-5 4h82v3H-5z" fill="#222"/><path d="M16 24h40M22 21h28" stroke="#888" stroke-width="1.200"/><path d="M-1 12h4v3h-4z" fill="#d33"/><path d="M-5 21h5v4h-5z" fill="#6a9be8"/><rect x="70" y="14" width="7" height="6" fill="#f0b93c"/><circle cx="22" cy="42" r="3" fill="#a01818"/><circle cx="36" cy="42" r="3.500" fill="#ea3d78"/><circle cx="50" cy="42" r="3" fill="#777"/><use href="#chrome" x="49" y="49" width="28" height="28"/></svg></div>
 <div class="app"><svg viewBox="0 0 72 72"><rect x="-5" y="5" width="82" height="61" fill="#2b2b2b"/><use href="#chrome" x="49" y="49" width="28" height="28"/></svg></div>
 <div class="app"><svg viewBox="0 0 72 72"><path d="M10 8l7-14 10 6 9-7 9 6 9-3 8 12z" fill="#e6e6e6"/><path d="M20 2l8 6M32-2l4 9M48 0l-6 8" stroke="#777" stroke-width="2"/><circle cx="30" cy="2" r="2.500" fill="#2aa7c7"/><circle cx="44" cy="3" r="2" fill="#d8743c"/><path d="M4 6q32 12 64 0l-9 63q-1 6-8 6H21q-7 0-8-6z" fill="url(#gBin)"/><path d="M4 6q32 12 64 0" fill="none" stroke="#c5c6c7" stroke-width="1.500"/></svg></div>
</footer>
<div class="under"></div>

<script>
// Outline: [title, children, chosen]
const outline = [
 ["章节 1：理解人工智能", [["人工智能的时代"],["人工智能的应用"],["人工智能是拟人"],
  ["人工智能基本概念与区别",[["深度学习优势"],["回归"],["分类"],["聚类"],["降维"]],true],
  ["从线性回归开始",[["连续值和离散值"],["简单线性回归"],["最优解"],["多元线性回归"]]]]],
 ["章节 2：深入线性回归推导出 MSE", [
  ["深入理解线性回归",[["理解回归一词来源"],["中心极限定理"],["正太分布与预测的关系"],["再理解一遍误差"],["最大似然估计"],["概率密度函数"],["假设正太分布的线性回归的最大总似然"]]],
  ["推导出线性回归损失函数 MSE",[["明确目标"],["对数似然函数"],["继续往后推导出损失函数 MSE"],["总结与扩展"]]]]],
 ["章节 3：代码实战解析解方式求解线性回归的 ...", [
  ["解析解的推导",[["最小二乘形式变化个写法"],["推导出θ的解析解形式"],["判定损失函数凸函数"]]]]]
];
const rows = (list, depth) => list.map(([t, kids, on]) =>
 `<li class="${kids && depth ? 'branch' : ''}"><a href="#" class="row-link ${kids ? '' : 'leaf'} ${on ? 'chosen' : ''}">${kids ? '<svg width="17" height="10"><use href="#chev"/></svg>' : ''}<span>${t}</span></a>${kids ? `<ul>${rows(kids, depth + 1)}</ul>` : ''}</li>`).join('');
document.getElementById('tree').innerHTML = rows(outline, 0);

// Mind map. Boxes: [text, left, top, right]; lined: [text, left, right, baseline rule y, text inset]
const OX = 670, OY = 155, canvas = document.getElementById('canvas');
const boxes = [["",1134,112,1222],["Inception",1134,162,1269],["Resnet",1134,213,1240],["DenseNet",1134,264,1272],["...",1134,314,1192],["目标检测",1025,365,1149],
 ["Faster-RCNN",1101,444,1272],["Yolo",1101,495,1187],["SSD",1101,545,1184],["Mask-RCNN",1101,596,1266],["MTCNN",1101,646,1223],["...",1101,697,1158],
 ["Cell",1083,826,1160],["BasicRNN",1134,906,1272],["LSTM",1134,956,1231],["网络拓扑",1021,1007,1144],
 ["ManyToOne",1097,1086,1259],["OneToMany",1097,1136,1258],["ManyToMany",1097,1187,1272],["Seq2Seq",1097,1238,1225],
 ["逻辑回归",2004,159,2127],["贝叶斯",2004,210,2106],["Softmax回归",2004,260,2168],["决策树",2004,311,2106],["集成学习",2004,361,2127,"yellow"],["...",2004,412,2061],
 ["聚类",1940,621,2021],["KMeans",1995,700,2115],["密度聚类",1995,751,2118],["层次聚类",1995,801,2118],["...",1995,852,2051],
 ["数据预处理",1737,953,1881],["归一化",1823,1032,1926],["降维",1823,1082,1905],["优化算法",1737,1133,1860],
 ["梯度下降",1813,1212,1936],["拟牛顿法",1813,1263,1936],["SMO",1813,1313,1905],["EM",1813,1364,1886]];
const lined = [["循环神经网络",1192,1378,794,43],["对抗神经网络",1219,1378,1335,16],["GAN",1198,1282,1414,17],["DCGAN",1110,1224,1493,17],
 ["无监督机器学习",1740,1920,510,16],["没有目标变量",1845,2005,589,16],["关联规则",1942,2060,949,16],["DQN",1740,1827,1575,17]];
let html = '';
for (const [t, l, y, r, c] of boxes) html += `<div class="node boxed ${c || ''}" style="left:${l - OX}px;top:${y - OY}px;width:${r - l}px">${t}</div>`;
for (const [t, l, r, y, p] of lined) html += `<div class="node lined" style="left:${l - OX}px;top:${y - 46 - OY}px;width:${r - l}px;padding-left:${p}px">${t}</div>`;
html += `<div class="node topic" style="left:${1629 - OX}px;top:${1427 - OY}px;width:188px"><span class="num position-absolute text-center">3</span>强化学习</div>`;
canvas.insertAdjacentHTML('beforeend', html);

// Fans of curves from a fold handle to the left edge of each child, then the handles themselves
const fans = [[1121,90,1134,[185,236,287,337]],[1088,421,1101,[467,518,568,619,669,720]],[1121,882,1134,[929,979]],[1083,1062,1097,[1109,1159,1210,1261]],
 [1991,60,2004,[182,233,283,334,384,435]],[1981,677,1995,[723,774,824,875]],[1809,1009,1823,[1055,1105]],[1800,1189,1813,[1235,1286,1336,1387]]];
const handles = [[1088,421],[1285,803],[1121,882],[1083,1062],[1298,1344],[1240,1424],[1830,518],[1926,597],[1981,677],[1809,1009],[1800,1189],[1724,1505]];
let d = '';
for (const [x, y, to, ends] of fans) for (const e of ends) d += `M${x} ${y - 9}V${y + 7}Q${x + 3} ${e - 4} ${to} ${e}`;
let s = `<path d="${d}" stroke="#8db3e0" stroke-width="2"/>`;
for (const [x, y] of handles) s += `<circle cx="${x}" cy="${y}" r="7" fill="#f4f7fd" stroke="#8fb0dd" stroke-width="2"/><path d="M${x - 4} ${y}h8" stroke="#8a9cc0" stroke-width="2"/>`;
document.getElementById('links').insertAdjacentHTML('beforeend', s);
</script>
</body>
</html>
